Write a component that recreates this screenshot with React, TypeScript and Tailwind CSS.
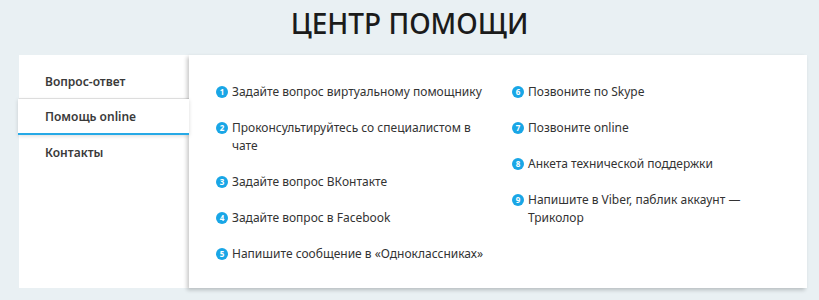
const left = [
  { n: 1, t: "Задайте вопрос виртуальному помощнику" },
  { n: 2, t: "Проконсультируйтесь со специалистом в чате" },
  { n: 3, t: "Задайте вопрос ВКонтакте" },
  { n: 4, t: "Задайте вопрос в Facebook" },
  { n: 5, t: "Напишите сообщение в «Одноклассниках»" },
];

const right = [
  { n: 6, t: "Позвоните по Skype" },
  { n: 7, t: "Позвоните online" },
  { n: 8, t: "Анкета технической поддержки" },
  { n: 9, t: "Напишите в Viber, паблик аккаунт — Триколор" },
];

function Item({ n, t }: { n: number; t: string }) {
  return (
    <li className="flex items-start gap-[4px] leading-[18px]">
      <span className="mt-[3px] flex h-[12px] w-[12px] shrink-0 items-center justify-center rounded-full bg-[#19a6e6] text-[8px] font-bold leading-none text-white">
        {n}
      </span>
      <span>{t}</span>
    </li>
  );
}

export default function App() {
  return (
    <div className="h-[300px] w-[819px] bg-[#e9f0f3] font-['Noto_Sans',sans-serif] text-[#333]">
      <h1 className="pt-[5px] text-center text-[28px] font-medium leading-[36px] text-[#1b1b1b]">
        ЦЕНТР ПОМОЩИ
      </h1>
      <div className="ml-[19px] mt-[14px] flex h-[233px] w-[788px]">
        <div className="w-[170px] bg-white pt-[17px] text-[12px] font-semibold text-[#3a3a3a]">
          <div className="h-[27px] border-b border-[#e6e6e6] pl-[26px] leading-[20px]">Вопрос-ответ</div>
          <div className="relative z-10 -ml-[1px] h-[36px] border-b-2 border-[#26a9e6] bg-white pl-[27px] leading-[36px] shadow-[0_1px_4px_rgba(0,0,0,0.15)]">
            Помощь online
          </div>
          <div className="h-[36px] pl-[26px] leading-[36px]">Контакты</div>
        </div>
        <div className="flex flex-1 gap-[28px] bg-white pl-[27px] pt-[28px] text-[12px] shadow-[-2px_2px_4px_rgba(0,0,0,0.22)]">
          <ul className="flex w-[268px] flex-col gap-[18px]">
            {left.map((i) => (
              <Item key={i.n} {...i} />
            ))}
          </ul>
          <ul className="flex w-[270px] flex-col gap-[18px]">
            {right.map((i) => (
              <Item key={i.n} {...i} />
            ))}
          </ul>
        </div>
      </div>
    </div>
  );
}
